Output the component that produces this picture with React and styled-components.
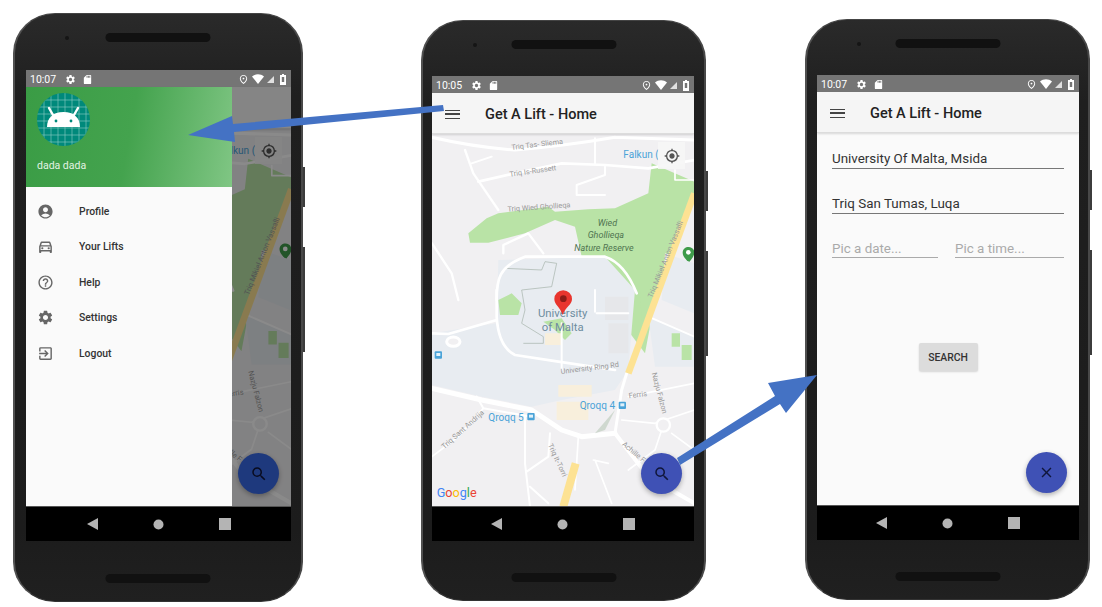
import React from 'react';
import styled, { createGlobalStyle } from 'styled-components';
import {
  MdAccountCircle,
  MdOutlineDirectionsCar,
  MdHelpOutline,
  MdSettings,
  MdExitToApp,
  MdSdCard,
  MdOutlinePlace,
  MdSearch,
  MdClose,
  MdGpsFixed,
} from 'react-icons/md';

const GlobalStyle = createGlobalStyle`
  html, body {
    margin: 0;
    padding: 0;
    background: #fff;
    font-family: Roboto, "Liberation Sans", sans-serif;
  }
`;

const Stage = styled.div`
  position: relative;
  width: 1102px;
  height: 607px;
  overflow: hidden;
  display: flex;
  align-items: flex-start;
  padding-left: 13px;
  box-sizing: border-box;
`;

// ------------------------------------------ phone body

const Phone = styled.div`
  position: relative;
  flex: none;
  box-sizing: border-box;
  width: ${(p) => p.$width}px;
  height: ${(p) => p.$height}px;
  margin-top: ${(p) => p.$top}px;
  margin-left: ${(p) => p.$left}px;
  padding: ${(p) => p.$pad};
  border-radius: 42px / 40px;
  background: linear-gradient(#2a2a2a, #1f1f1f 14%, #1c1c1c 88%, #202020);
  border-left: 2px solid #505050;
  border-right: 2px solid #484848;
  border-top: 1px solid #444;
  border-bottom: 1px solid #333;
`;

const Speaker = styled.div`
  position: absolute;
  left: 50%;
  transform: translateX(-50%);
  ${(p) => (p.$bottom ? 'bottom: 18px;' : 'top: 19px;')}
  width: 105px;
  height: 9px;
  border-radius: 4.5px;
  background: #111;
`;

const Camera = styled.div`
  position: absolute;
  top: 22px;
  left: 50px;
  width: 4px;
  height: 4px;
  border-radius: 50%;
  background: #151515;
`;

const SideKey = styled.div`
  position: absolute;
  right: -4px;
  top: ${(p) => p.$top}px;
  width: 2px;
  height: ${(p) => p.$height}px;
  background: #3c3c3c;
`;

const Screen = styled.div`
  display: flex;
  flex-direction: column;
  height: 100%;
  overflow: hidden;
  background: #fafafa;
`;

// ------------------------------------------ status bar

const StatusBarRow = styled.div`
  flex: none;
  height: 17px;
  box-sizing: border-box;
  display: flex;
  align-items: center;
  padding: 1px 5px 0 4px;
  background: #757575;
  color: #fff;
  font-size: 10.5px;
`;

const StatusTime = styled.span`
  margin-right: 3px;
`;

const StatusLeft = styled.div`
  display: flex;
  align-items: center;
  gap: 6px;
  flex: 1;
`;

const StatusRight = styled.div`
  display: flex;
  align-items: center;
  gap: 3px;
`;

const BatteryIcon = styled.svg`
  margin-left: 3.5px;
`;

const StatusBar = ({ time }) => (
  <StatusBarRow>
    <StatusLeft>
      <StatusTime>{time}</StatusTime>
      <MdSettings size={11} />
      <MdSdCard size={11} />
    </StatusLeft>
    <StatusRight>
      <MdOutlinePlace size={11} />
      <svg width="12" height="10" viewBox="0 0 12 10">
        <path d="M0 2.5C3.5-.5 8.5-.5 12 2.5L6 10z" fill="#fff" />
      </svg>
      <svg width="7" height="7" viewBox="0 0 7 7">
        <path d="M7 0v7H0z" fill="#e0e0e0" />
      </svg>
      <BatteryIcon width="6" height="11" viewBox="0 0 6 11">
        <path d="M2 0h2v1h2v10H0V1h2z" fill="#fff" />
        <path d="M1.8 3h2.4v5H1.8z" fill="#757575" />
      </BatteryIcon>
    </StatusRight>
  </StatusBarRow>
);

// ------------------------------------------ nav bar

const NavBarRow = styled.div`
  flex: none;
  height: 35px;
  display: flex;
  align-items: center;
  justify-content: center;
  gap: 55px;
  background: #000;
  border-top: 1px solid #555;
  box-sizing: border-box;
`;

const NavBar = () => (
  <NavBarRow>
    <svg width="11" height="12" viewBox="0 0 11 12"><path d="M11 0v12L0 6z" fill="#b4b4b4" /></svg>
    <svg width="11" height="11" viewBox="0 0 11 11"><circle cx="5.5" cy="5.5" r="5" fill="#b4b4b4" /></svg>
    <svg width="12" height="12" viewBox="0 0 12 12"><rect width="12" height="12" fill="#b4b4b4" /></svg>
  </NavBarRow>
);

// ------------------------------------------ app bar

const AppBar = styled.div`
  flex: none;
  height: ${(p) => p.$height || 41}px;
  display: flex;
  align-items: center;
  padding: 2px 0 0 13px;
  background: #f5f5f5;
  border-bottom: 1px solid #dcdcdc;
  box-shadow: 0 1px 2px rgba(0, 0, 0, 0.14);
  box-sizing: border-box;
  position: relative;
  z-index: 1;
`;

const Burger = styled.div`
  width: 15px;
  height: 7px;
  margin-right: 25px;
  border-top: 1.5px solid #444;
  border-bottom: 1.5px solid #444;
  position: relative;
  &::after {
    content: '';
    position: absolute;
    left: 0;
    right: 0;
    top: 2.75px;
    height: 1.5px;
    background: #444;
  }
`;

const AppTitle = styled.div`
  font-size: 14.5px;
  font-weight: 500;
  color: #222;
`;

const Content = styled.div`
  position: relative;
  flex: 1;
  min-height: 0;
  display: flex;
  flex-direction: column;
`;

const Body = styled.div`
  position: relative;
  flex: 1;
  min-height: 0;
`;

const Fab = styled.div`
  position: absolute;
  right: 12px;
  bottom: 12px;
  width: 41px;
  height: 41px;
  border-radius: 50%;
  display: flex;
  align-items: center;
  justify-content: center;
  background: ${(p) => p.$color || '#3f51b5'};
  color: #10163a;
  box-shadow: 0 2px 5px rgba(0, 0, 0, 0.3);
`;

// ------------------------------------------ map

const MapSvg = styled.svg`
  display: block;
  width: 100%;
  height: 100%;
  background: #f1f0f2;
`;

const LocateButton = styled.div`
  position: absolute;
  top: 8px;
  right: 9px;
  width: 27px;
  height: 27px;
  display: flex;
  align-items: center;
  justify-content: center;
  background: rgba(246, 246, 246, 0.9);
  color: #555;
`;

const road = { fill: 'none', stroke: '#fff', strokeLinecap: 'round', strokeLinejoin: 'round' };
const grey = { fill: '#999', fontSize: 22, fontFamily: 'Roboto, sans-serif' };
const blue = { fill: '#4aa3d8', fontSize: 30, fontFamily: 'Roboto, sans-serif' };
const green = { fill: '#4f7350', fontSize: 27, fontStyle: 'italic', fontFamily: 'Roboto, sans-serif' };

const BusStop = ({ x, y }) => (
  <g>
    <rect x={x - 11} y={y - 11} width="22" height="22" rx="3" fill="#4aa3d8" />
    <rect x={x - 6} y={y - 6} width="12" height="9" fill="#dff0fa" />
  </g>
);

const MapArea = ({ fabColor }) => (
  <Body>
    <MapSvg viewBox="0 0 786 1116" preserveAspectRatio="none">
      {/* top half, numbers read off the upper crop */}
      <g transform="translate(-51,-222)">
        <path d="M160 520L215 475L250 460L400 440L420 455L520 448L600 445L700 400L710 310L838 365L838 400L720 720L690 880L600 760L540 650L500 590L480 500L420 480L330 520L220 548L165 548Z" fill="#b9e3a6" />
        <path d="M50 232Q180 262 300 270Q450 258 600 232M600 232L838 240" {...road} strokeWidth="9" />
        <path d="M150 270L175 340L250 450" {...road} strokeWidth="7" />
        <path d="M190 365L300 340L440 310L570 315L700 325L838 300" {...road} strokeWidth="8" />
        <path d="M170 310L230 290M540 235V310M570 320V345L485 375V405L570 405" {...road} strokeWidth="6" />
        <path d="M51 550L110 640L130 720M265 580V555L340 520L385 580" {...road} strokeWidth="7" />
        <path d="M780 330V360H838" {...road} strokeWidth="5" />
        <text x="290" y="270" transform="rotate(-7 290 270)" {...grey}>Triq Tas- Sliema</text>
        <text x="285" y="350" transform="rotate(-8 285 350)" {...grey}>Triq Is-Russett</text>
        <text x="278" y="455" transform="rotate(-4 278 455)" {...grey}>Triq Wied Ghollieqa</text>
        <text x="548" y="498" {...green}>Wied</text>
        <text x="518" y="535" {...green}>Ghollieqa</text>
        <text x="478" y="572" {...green}>Nature Reserve</text>
        <text x="625" y="295" {...blue}>Falkun (</text>
        <path d="M803 578C803 555 838 555 838 578C838 592 824 600 821 612C818 600 803 592 803 578Z" fill="#3f9b4a" />
        <circle cx="820" cy="577" r="7" fill="#fff" />
      </g>
      {/* bottom half */}
      <g transform="translate(-51,468)">
        <path d="M250 -90L570 -100L660 0L640 240L600 300L440 330L350 350L200 320L51 285V130L245 100Z" fill="#e8ecf1" />
        <path d="M700 80L838 140V230L720 230ZM750 -110L838 -80V70L740 30Z" fill="#e8ecf1" />
        <path d="M250 30L290 10L320 40L310 75L255 75ZM385 95L440 85L470 130L450 150L420 120ZM770 130H795V170H770ZM800 165H830V210H800ZM675 0H705V60L680 90Z" fill="#b9e3a6" />
        <path d="M430 285H530V320H430ZM425 335H520V390H425ZM390 130H440V165H390Z" fill="#f8efdc" />
        <path d="M570 20H640V90H570ZM580 100H640V190H580Z" fill="#e6e7ea" />
        <path d="M270 -65L380 -60L390 -85L425 -80L410 -10L320 0L330 60L320 100L385 140V160H325" fill="none" stroke="#a3b0a8" strokeWidth="2" />
        <path d="M245 30C245 -30 250 -70 330 -100L570 -100Q630 -80 665 10" {...road} strokeWidth="8" />
        <path d="M245 0V80Q250 170 300 195L430 215L600 240M51 130L100 132L245 90" {...road} strokeWidth="8" />
        <path d="M440 100V240M700 80L838 140M540 0V65M545 70H640" {...road} strokeWidth="6" />
        <path d="M51 295L200 330L350 360L440 420L500 440L600 430" {...road} strokeWidth="15" />
        <path d="M600 430L620 300L635 250" {...road} strokeWidth="9" />
        <path d="M600 430L700 560L838 640" {...road} strokeWidth="12" />
        <path d="M185 320L205 355L350 380M330 380V520L345 650M405 430L400 500L335 545M345 590L400 640" {...road} strokeWidth="6" />
        <path d="M51 500L130 440L205 355M540 510L590 640M535 510L580 520M620 390L720 400L838 360M640 320L838 280M745 405L720 480M770 430L838 480M720 480L640 540M490 440L480 600" {...road} strokeWidth="5" />
        <circle cx="745" cy="405" r="20" fill="#f1f0f2" stroke="#fff" strokeWidth="7" />
        <ellipse cx="115" cy="155" rx="20" ry="14" fill="#f1f0f2" stroke="#fff" strokeWidth="9" />
        <path d="M600 360L570 420L540 430Z" fill="#cfd8cf" />
        <path d="M838 -290L640 250" fill="none" stroke="#fde293" strokeWidth="20" />
        <path d="M482 520L445 650" fill="none" stroke="#fde293" strokeWidth="24" />
        <text x="712" y="25" transform="rotate(-68 712 25)" {...grey}>Triq Mikiel Anton Vassalli</text>
        <text x="438" y="252" transform="rotate(-7 438 252)" {...grey}>University Ring Rd</text>
        <text x="642" y="325" transform="rotate(-7 642 325)" {...grey}>Ferris</text>
        <text x="710" y="250" transform="rotate(75 710 250)" {...grey}>Nazju Falzon</text>
        <text x="88" y="478" transform="rotate(-42 88 478)" {...grey}>Triq Sant Andrija</text>
        <text x="398" y="465" transform="rotate(65 398 465)" {...grey}>Triq It-Torri</text>
        <text x="620" y="465" transform="rotate(40 620 465)" {...grey}>Achille F</text>
        <text x="220" y="392" {...blue}>Qroqq 5</text>
        <text x="494" y="358" {...blue}>Qroqq 4</text>
        <BusStop x={70} y={195} />
        <BusStop x={348} y={380} />
        <BusStop x={622} y={346} />
        <text x="443" y="82" textAnchor="middle" fill="#6f8c9f" fontSize="34" fontFamily="Roboto, sans-serif">University</text>
        <text x="443" y="122" textAnchor="middle" fill="#6f8c9f" fontSize="34" fontFamily="Roboto, sans-serif">of Malta</text>
        <path d="M443 75C435 50 418 45 418 27A26 26 0 0 1 471 27C471 45 452 50 443 75Z" fill="#e8352e" />
        <circle cx="445" cy="26" r="10" fill="#8c1c17" />
        <text x="65" y="622" fontSize="38" fontFamily="Roboto, sans-serif">
          <tspan fill="#4285f4">G</tspan>
          <tspan fill="#ea4335">o</tspan>
          <tspan fill="#fbbc05">o</tspan>
          <tspan fill="#4285f4">g</tspan>
          <tspan fill="#34a853">l</tspan>
          <tspan fill="#ea4335">e</tspan>
        </text>
      </g>
    </MapSvg>
    <LocateButton>
      <MdGpsFixed size={16} />
    </LocateButton>
    <Fab $color={fabColor}>
      <MdSearch size={18} />
    </Fab>
  </Body>
);

// ------------------------------------------ drawer

const Scrim = styled.div`
  position: absolute;
  inset: 0;
  z-index: 2;
  background: rgba(0, 0, 0, 0.46);
`;

const Drawer = styled.div`
  position: absolute;
  z-index: 3;
  top: 0;
  left: 0;
  bottom: 0;
  width: 206px;
  background: #fafafa;
`;

const DrawerHeader = styled.div`
  height: 100px;
  box-sizing: border-box;
  padding: 6px 0 0 11px;
  background: linear-gradient(100deg, #3a9c45 0%, #44a34e 50%, #80c684 100%);
  color: #e3f3e3;
  font-size: 10.5px;
`;

const Avatar = styled.div`
  width: 53px;
  height: 53px;
  margin-bottom: 13px;
`;

const MenuList = styled.div`
  display: flex;
  flex-direction: column;
  padding-top: 6.5px;
`;

const MenuRow = styled.div`
  height: 35.5px;
  display: flex;
  align-items: center;
  padding-left: 11px;
  font-size: 10.4px;
  font-weight: 500;
  color: #333;
`;

const MenuIcon = styled.span`
  width: 42px;
  flex: none;
  display: flex;
  color: #666;
`;

const menu = [
  { label: 'Profile', Icon: MdAccountCircle },
  { label: 'Your Lifts', Icon: MdOutlineDirectionsCar },
  { label: 'Help', Icon: MdHelpOutline },
  { label: 'Settings', Icon: MdSettings },
  { label: 'Logout', Icon: MdExitToApp },
];

const gridLines = [7, 14, 21, 28, 35, 42, 49];

const AndroidAvatar = () => (
  <svg width="53" height="53" viewBox="0 0 53 53">
    <clipPath id="avatar-clip">
      <circle cx="26.5" cy="26.5" r="26.5" />
    </clipPath>
    <circle cx="26.5" cy="26.5" r="26.5" fill="#00897b" />
    <g clipPath="url(#avatar-clip)" stroke="#8fcfc6" strokeWidth="0.6">
      {gridLines.map((v) => (
        <g key={v}>
          <path d={`M${v} 0V53`} />
          <path d={`M0 ${v}H53`} />
        </g>
      ))}
    </g>
    <path d="M10 34C10 25 16 19 26.5 19C37 19 43 25 43 34Z" fill="#fff" />
    <path d="M16 22L12 15M37 22L41 15" stroke="#fff" strokeWidth="2.4" strokeLinecap="round" />
    <circle cx="19" cy="28" r="1.4" fill="#00897b" />
    <circle cx="34" cy="28" r="1.4" fill="#00897b" />
  </svg>
);

// ------------------------------------------ search form

const Form = styled.div`
  position: relative;
  flex: 1;
  padding: 16px 15px 0;
  display: flex;
  flex-direction: column;
  background: #fafafa;
`;

const FieldRow = styled.div`
  display: flex;
  gap: 17px;
  margin-bottom: 24.5px;
`;

const Field = styled.div`
  flex: ${(p) => p.$grow || 1};
  height: 19px;
  line-height: ${(p) => (p.$hint ? 22 : 20)}px;
  font-size: 13.4px;
  color: ${(p) => (p.$hint ? '#aaa' : '#333')};
  border-bottom: 1px solid ${(p) => (p.$hint ? '#aaa' : '#777')};
`;

const SearchButton = styled.div`
  align-self: center;
  margin-top: 60.5px;
  width: 59px;
  height: 28px;
  display: flex;
  align-items: center;
  justify-content: center;
  border-radius: 2px;
  background: #dcdcdc;
  box-shadow: 0 1px 2px rgba(0, 0, 0, 0.15);
  font-size: 10.4px;
  font-weight: 500;
  color: #333;
`;

// ------------------------------------------ blue arrows over the phones

const ArrowLayer = styled.svg`
  position: absolute;
  top: 0;
  left: 0;
  z-index: 5;
  width: 1102px;
  height: 607px;
  pointer-events: none;
`;

const PhoneShell = ({ width, height, top, left, pad, keys, children }) => (
  <Phone $width={width} $height={height} $top={top} $left={left} $pad={pad}>
    <Camera />
    <Speaker />
    <Speaker $bottom />
    <SideKey $top={keys[0]} $height={40} />
    <SideKey $top={keys[1]} $height={105} />
    <Screen>{children}</Screen>
  </Phone>
);

const App = () => {
  return (
    <Stage>
      <GlobalStyle />

      {/* Drawer open */}
      <PhoneShell width={290} height={589} top={13} left={0} pad="56px 10px 60px 11px" keys={[153, 233]}>
        <StatusBar time="10:07" />
        <Content>
          <AppBar $height={42}>
            <Burger />
            <AppTitle>Get A Lift - Home</AppTitle>
          </AppBar>
          <MapArea fabColor="#396ae8" />
          <Scrim />
          <Drawer>
            <DrawerHeader>
              <Avatar><AndroidAvatar /></Avatar>
              dada dada
            </DrawerHeader>
            <MenuList>
              {menu.map(({ label, Icon }) => (
                <MenuRow key={label}>
                  <MenuIcon><Icon size={17} /></MenuIcon>
                  {label}
                </MenuRow>
              ))}
            </MenuList>
          </Drawer>
        </Content>
        <NavBar />
      </PhoneShell>

      {/* Home map */}
      <PhoneShell width={285} height={581} top={20} left={118} pad="55px 10px 59px 9px" keys={[150, 230]}>
        <StatusBar time="10:05" />
        <Content>
          <AppBar>
            <Burger />
            <AppTitle>Get A Lift - Home</AppTitle>
          </AppBar>
          <MapArea />
        </Content>
        <NavBar />
      </PhoneShell>

      {/* Search form */}
      <PhoneShell width={285} height={581} top={19} left={99} pad="55px 9px 59px 10px" keys={[150, 230]}>
        <StatusBar time="10:07" />
        <Content>
          <AppBar>
            <Burger />
            <AppTitle>Get A Lift - Home</AppTitle>
          </AppBar>
          <Form>
            <FieldRow><Field>University Of Malta, Msida</Field></FieldRow>
            <FieldRow><Field>Triq San Tumas, Luqa</Field></FieldRow>
            <FieldRow>
              <Field $hint $grow={106}>Pic a date...</Field>
              <Field $hint $grow={109}>Pic a time...</Field>
            </FieldRow>
            <SearchButton>SEARCH</SearchButton>
            <Fab>
              <MdClose size={17} />
            </Fab>
          </Form>
        </Content>
        <NavBar />
      </PhoneShell>

      <ArrowLayer viewBox="0 0 1102 607">
        <path d="M188 135L232 116L233 124L443 105L444 111L234 132L235 142Z" fill="#4472c4" />
        <path d="M817 375L768 383L775 396L677 458L680 465L780 404L786 413Z" fill="#4472c4" />
      </ArrowLayer>
    </Stage>
  );
};

export default App;
